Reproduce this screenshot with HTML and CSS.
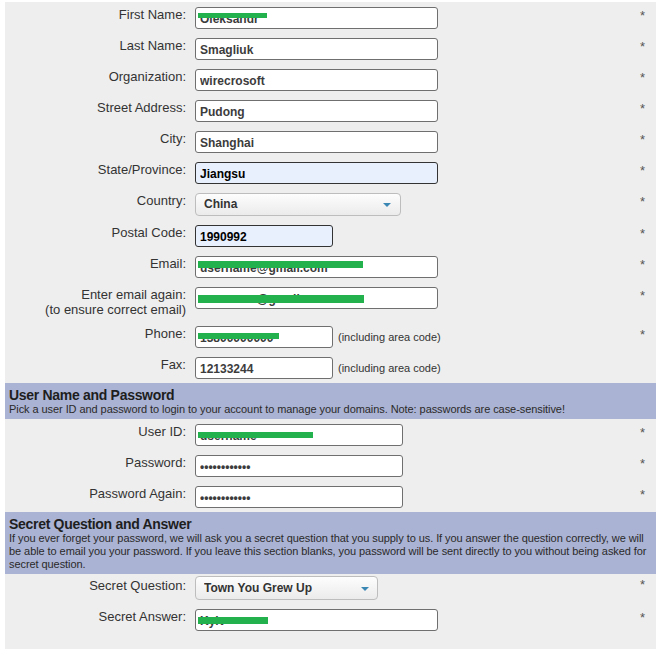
FILE: index.html
```html
<!DOCTYPE html>
<html>
<head>
<meta charset="utf-8">
<link rel="stylesheet" href="styles.css">
</head>
<body>
<div class="form">
  <div class="row">
    <label class="lbl">First Name:</label>
    <div class="fld"><span class="wrap"><input class="txt w-long" value="Oleksandr"><span class="redact r-first"></span></span></div>
    <span class="req">*</span>
  </div>
  <div class="row">
    <label class="lbl">Last Name:</label>
    <div class="fld"><input class="txt w-long" value="Smagliuk"></div>
    <span class="req">*</span>
  </div>
  <div class="row">
    <label class="lbl">Organization:</label>
    <div class="fld"><input class="txt w-long" value="wirecrosoft"></div>
    <span class="req">*</span>
  </div>
  <div class="row">
    <label class="lbl">Street Address:</label>
    <div class="fld"><input class="txt w-long" value="Pudong"></div>
    <span class="req">*</span>
  </div>
  <div class="row">
    <label class="lbl">City:</label>
    <div class="fld"><input class="txt w-long" value="Shanghai"></div>
    <span class="req">*</span>
  </div>
  <div class="row">
    <label class="lbl">State/Province:</label>
    <div class="fld"><input class="txt w-long auto" value="Jiangsu"></div>
    <span class="req">*</span>
  </div>
  <div class="row">
    <label class="lbl">Country:</label>
    <div class="fld"><span class="wrap"><select class="sel w-country"><option>China</option></select><span class="arrow"></span></span></div>
    <span class="req">*</span>
  </div>
  <div class="row">
    <label class="lbl">Postal Code:</label>
    <div class="fld"><input class="txt w-mid auto" value="1990992"></div>
    <span class="req">*</span>
  </div>
  <div class="row">
    <label class="lbl">Email:</label>
    <div class="fld"><span class="wrap"><input class="txt w-long" value="username@gmail.com"><span class="redact r-email"></span></span></div>
    <span class="req">*</span>
  </div>
  <div class="row">
    <label class="lbl">Enter email again:<br>(to ensure correct email)</label>
    <div class="fld"><span class="wrap"><input class="txt w-long" value="username@gmail.com"><span class="redact r-email2"></span></span></div>
    <span class="req">*</span>
  </div>
  <div class="row">
    <label class="lbl">Phone:</label>
    <div class="fld"><span class="wrap"><input class="txt w-mid" value="13800000000"><span class="redact r-phone"></span></span><span class="note">(including area code)</span></div>
    <span class="req">*</span>
  </div>
  <div class="row">
    <label class="lbl">Fax:</label>
    <div class="fld"><input class="txt w-mid" value="12133244"><span class="note">(including area code)</span></div>
    <span class="req"></span>
  </div>

  <div class="section">
    <div class="sec-title">User Name and Password</div>
    <div class="sec-desc">Pick a user ID and password to login to your account to manage your domains. Note: passwords are case-sensitive!</div>
  </div>

  <div class="row">
    <label class="lbl">User ID:</label>
    <div class="fld"><span class="wrap"><input class="txt w-user" value="username"><span class="redact r-user"></span></span></div>
    <span class="req">*</span>
  </div>
  <div class="row">
    <label class="lbl">Password:</label>
    <div class="fld"><input class="txt w-user" type="password" value="abcdefghijkl"></div>
    <span class="req">*</span>
  </div>
  <div class="row">
    <label class="lbl">Password Again:</label>
    <div class="fld"><input class="txt w-user" type="password" value="abcdefghijkl"></div>
    <span class="req">*</span>
  </div>

  <div class="section">
    <div class="sec-title">Secret Question and Answer</div>
    <div class="sec-desc">If you ever forget your password, we will ask you a secret question that you supply to us. If you answer the question correctly, we will be able to email you your password. If you leave this section blanks, you password will be sent directly to you without being asked for secret question.</div>
  </div>

  <div class="row tight">
    <label class="lbl">Secret Question:</label>
    <div class="fld"><span class="wrap"><select class="sel w-q"><option>Town You Grew Up</option></select><span class="arrow arrow-q"></span></span></div>
    <span class="req">*</span>
  </div>
  <div class="row">
    <label class="lbl">Secret Answer:</label>
    <div class="fld"><span class="wrap"><input class="txt w-long" value="Kyiv"><span class="redact r-answer"></span></span></div>
    <span class="req">*</span>
  </div>
</div>
</body>
</html>
```

FILE: styles.css
```css
body {
  margin: 0;
  background: #fff;
  font-family: "Liberation Sans", Arial, sans-serif;
}

.form {
  margin: 2px 4px 0 5px;
  width: 651px;
  background: #eeeeee;
  padding-bottom: 15px;
}

.row {
  display: grid;
  grid-template-columns: 181px 436px 16px;
  column-gap: 9px;
  padding: 5px 0 4px;
  align-items: start;
}

.row.tight {
  padding-top: 2px;
  padding-bottom: 4px;
}

.lbl {
  text-align: right;
  font-size: 13px;
  line-height: 15px;
  color: #333;
}

.tight .lbl {
  padding-top: 2px;
}

.req {
  font-size: 13px;
  line-height: 15px;
  color: #555;
  padding-top: 1px;
}

.fld {
  display: flex;
  align-items: center;
  gap: 5px;
}

.wrap {
  position: relative;
  display: inline-block;
  line-height: 0;
}

.txt {
  box-sizing: border-box;
  height: 22px;
  margin: 0;
  padding: 1px 4px 0;
  border: 1px solid #6f6f6f;
  border-radius: 3px;
  background: #fff;
  font: bold 12px "Liberation Sans", Arial, sans-serif;
  color: #3c3c3c;
  outline: none;
}

.txt.auto {
  background: #e8f0fe;
  border-color: #333;
  color: #000;
}

.w-long { width: 243px; }
.w-mid { width: 138px; }
.w-user { width: 208px; }
.w-country { width: 206px; }
.w-q { width: 183px; }

.sel {
  appearance: none;
  -webkit-appearance: none;
  box-sizing: border-box;
  height: 23px;
  margin: 0;
  padding: 0 0 1px 8px;
  border: 1px solid #bdbdbd;
  border-radius: 4px;
  background: linear-gradient(#fdfdfd, #ebebeb);
  font: bold 12px "Liberation Sans", Arial, sans-serif;
  color: #333;
  outline: none;
}

.w-q { height: 24px; }

.arrow {
  position: absolute;
  right: 10px;
  top: 10px;
  width: 0;
  height: 0;
  border-left: 4px solid transparent;
  border-right: 4px solid transparent;
  border-top: 4px solid #3a87b4;
}

.arrow-q { right: 9px; top: 11px; }

.note {
  font-size: 11px;
  color: #333;
}

.redact {
  position: absolute;
  left: 3px;
  background: #22b14c;
}

.r-first { top: 6px; height: 5px; width: 69px; }
.r-email { top: 5px; height: 7px; width: 165px; }
.r-email2 { top: 8px; height: 8px; width: 166px; }
.r-phone { top: 7px; height: 6px; width: 81px; }
.r-user { top: 8px; height: 6px; width: 115px; }
.r-answer { top: 8px; height: 7px; width: 70px; }

.section {
  background: #aab3d3;
  padding: 4px 4px 3px;
  color: #1e1e1e;
}

.sec-title {
  font-weight: bold;
  font-size: 14px;
  line-height: 16px;
  letter-spacing: -0.3px;
}

.sec-desc {
  font-size: 11px;
  line-height: 13px;
  letter-spacing: -0.07px;
  color: #2a2a2a;
}
```
